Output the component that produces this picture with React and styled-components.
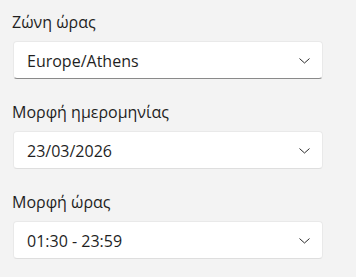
import React from 'react'
import styled, { createGlobalStyle } from 'styled-components'

const Global = createGlobalStyle`
  html, body {
    margin: 0;
    padding: 0;
    background: #f3f3f3;
  }
  body {
    font-family: "Open Sans", "Noto Sans", sans-serif;
    color: #1f1f1f;
  }
`

const Panel = styled.div`
  display: flex;
  flex-direction: column;
  gap: 22px;
  padding: 11px 0 0 12px;
  width: 311px;
`

const Field = styled.div`
  display: flex;
  flex-direction: column;
  gap: 8px;
`

const Label = styled.div`
  font-size: 16px;
  line-height: 22px;
  color: #1f1f1f;
`

const Box = styled.div`
  box-sizing: border-box;
  height: 38px;
  margin-left: 1px;
  width: 310px;
  display: flex;
  align-items: center;
  justify-content: space-between;
  padding: 2px 12px 0 13px;
  background: #fff;
  border: 1px solid #e9e9e9;
  border-bottom-color: ${({ $active }) => ($active ? '#8a8a8a' : '#dedede')};
  border-radius: 4px;
  font-size: 16px;
  color: #1f1f1f;
`

const Chevron = () => (
  <svg width="11" height="6" viewBox="0 0 11 6" fill="none">
    <path d="M0.8 0.8 L5.5 5 L10.2 0.8" stroke="#2b2b2b" strokeWidth="1" strokeLinecap="round" strokeLinejoin="round" />
  </svg>
)

const fields = [
  { label: 'Ζώνη ώρας', value: 'Europe/Athens', active: true },
  { label: 'Μορφή ημερομηνίας', value: '23/03/2026' },
  { label: 'Μορφή ώρας', value: '01:30 - 23:59' },
]

export default function App() {
  return (
    <>
      <Global />
      <Panel>
        {fields.map((f) => (
          <Field key={f.label}>
            <Label>{f.label}</Label>
            <Box $active={f.active}>
              <span>{f.value}</span>
              <Chevron />
            </Box>
          </Field>
        ))}
      </Panel>
    </>
  )
}
